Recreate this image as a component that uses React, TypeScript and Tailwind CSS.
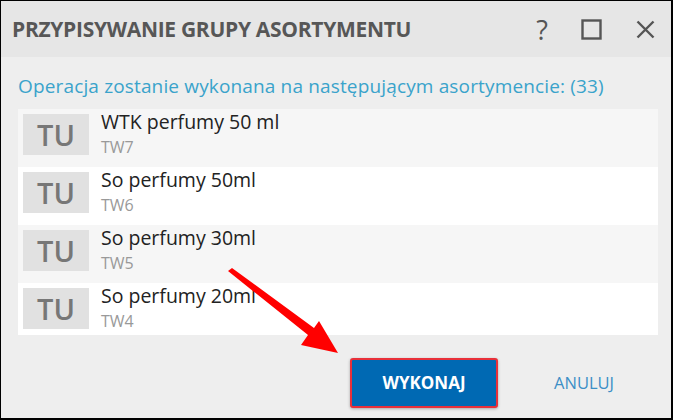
import React from "react";

const items = [
  { name: "WTK perfumy 50 ml", code: "TW7" },
  { name: "So perfumy 50ml", code: "TW6" },
  { name: "So perfumy 30ml", code: "TW5" },
  { name: "So perfumy 20ml", code: "TW4" },
];

export default function App() {
  return (
    <div
      className="relative w-[673px] h-[420px] bg-[#eeeeee] border-l border-t border-r-2 border-b-2 border-black flex flex-col overflow-hidden"
      style={{ fontFamily: '"Open Sans", "Noto Sans", sans-serif' }}
    >
      <div className="h-[56px] shrink-0 bg-[#e6e6e6] flex items-center pl-[11px] pr-[16px]">
        <div className="text-[21px] font-bold text-[#575757] tracking-[-0.3px] flex-1 pt-[1px]">
          PRZYPISYWANIE GRUPY ASORTYMENTU
        </div>
        <div className="flex items-center text-[#555]">
          <span className="text-[27px] leading-none w-[12px] text-center">?</span>
          <svg className="ml-[33px]" width="21" height="21" viewBox="0 0 21 21">
            <rect x="1.5" y="1.5" width="18" height="18" fill="none" stroke="#555" strokeWidth="2.4" />
          </svg>
          <svg className="ml-[34px]" width="19" height="19" viewBox="0 0 19 19">
            <path d="M1.5 1.5 L17.5 17.5 M17.5 1.5 L1.5 17.5" stroke="#555" strokeWidth="2.4" />
          </svg>
        </div>
      </div>
      <div className="flex flex-col px-[16px] pt-[17px]">
        <div className="text-[19px] text-[#3aa3cb] leading-[24px] tracking-[0.15px] pl-[1px]">
          Operacja zostanie wykonana na następującym asortymencie: (33)
        </div>
        <div className="mt-[11px] h-[226px] overflow-hidden flex flex-col w-[640px] ml-[1px]">
          {items.map((it, i) => (
            <div
              key={it.code}
              className={`h-[58px] shrink-0 flex items-start pl-[5px] pt-[5px] ${i % 2 === 0 ? "bg-[#f6f6f6]" : "bg-white"}`}
            >
              <div className="w-[66px] h-[41px] bg-[#e1e1e1] flex items-center justify-center text-[29px] font-semibold text-[#777] leading-none">
                TU
              </div>
              <div className="ml-[12px] flex flex-col">
                <div className="text-[19.5px] text-[#222] leading-[24px] -mt-[4px]">{it.name}</div>
                <div className="text-[16px] text-[#999] leading-[20px] mt-[3px]">{it.code}</div>
              </div>
            </div>
          ))}
        </div>
      </div>
      <div className="flex items-center justify-end mt-[23px] pr-[57px]">
        <button className="w-[148px] h-[50px] bg-[#0069b3] border-2 border-[#e8303a] rounded-[3px] text-white text-[17px] font-bold shadow-[0_1px_3px_rgba(0,0,0,0.3)]">
          WYKONAJ
        </button>
        <div className="ml-[56px] text-[16.5px] text-[#3c8fc6]">ANULUJ</div>
      </div>
      <svg className="absolute left-0 top-0 pointer-events-none" width="673" height="420">
        <polygon points="227,270 231,267 313,327 318,320 337,352 300,344 307,334" fill="#f00" />
      </svg>
    </div>
  );
}
